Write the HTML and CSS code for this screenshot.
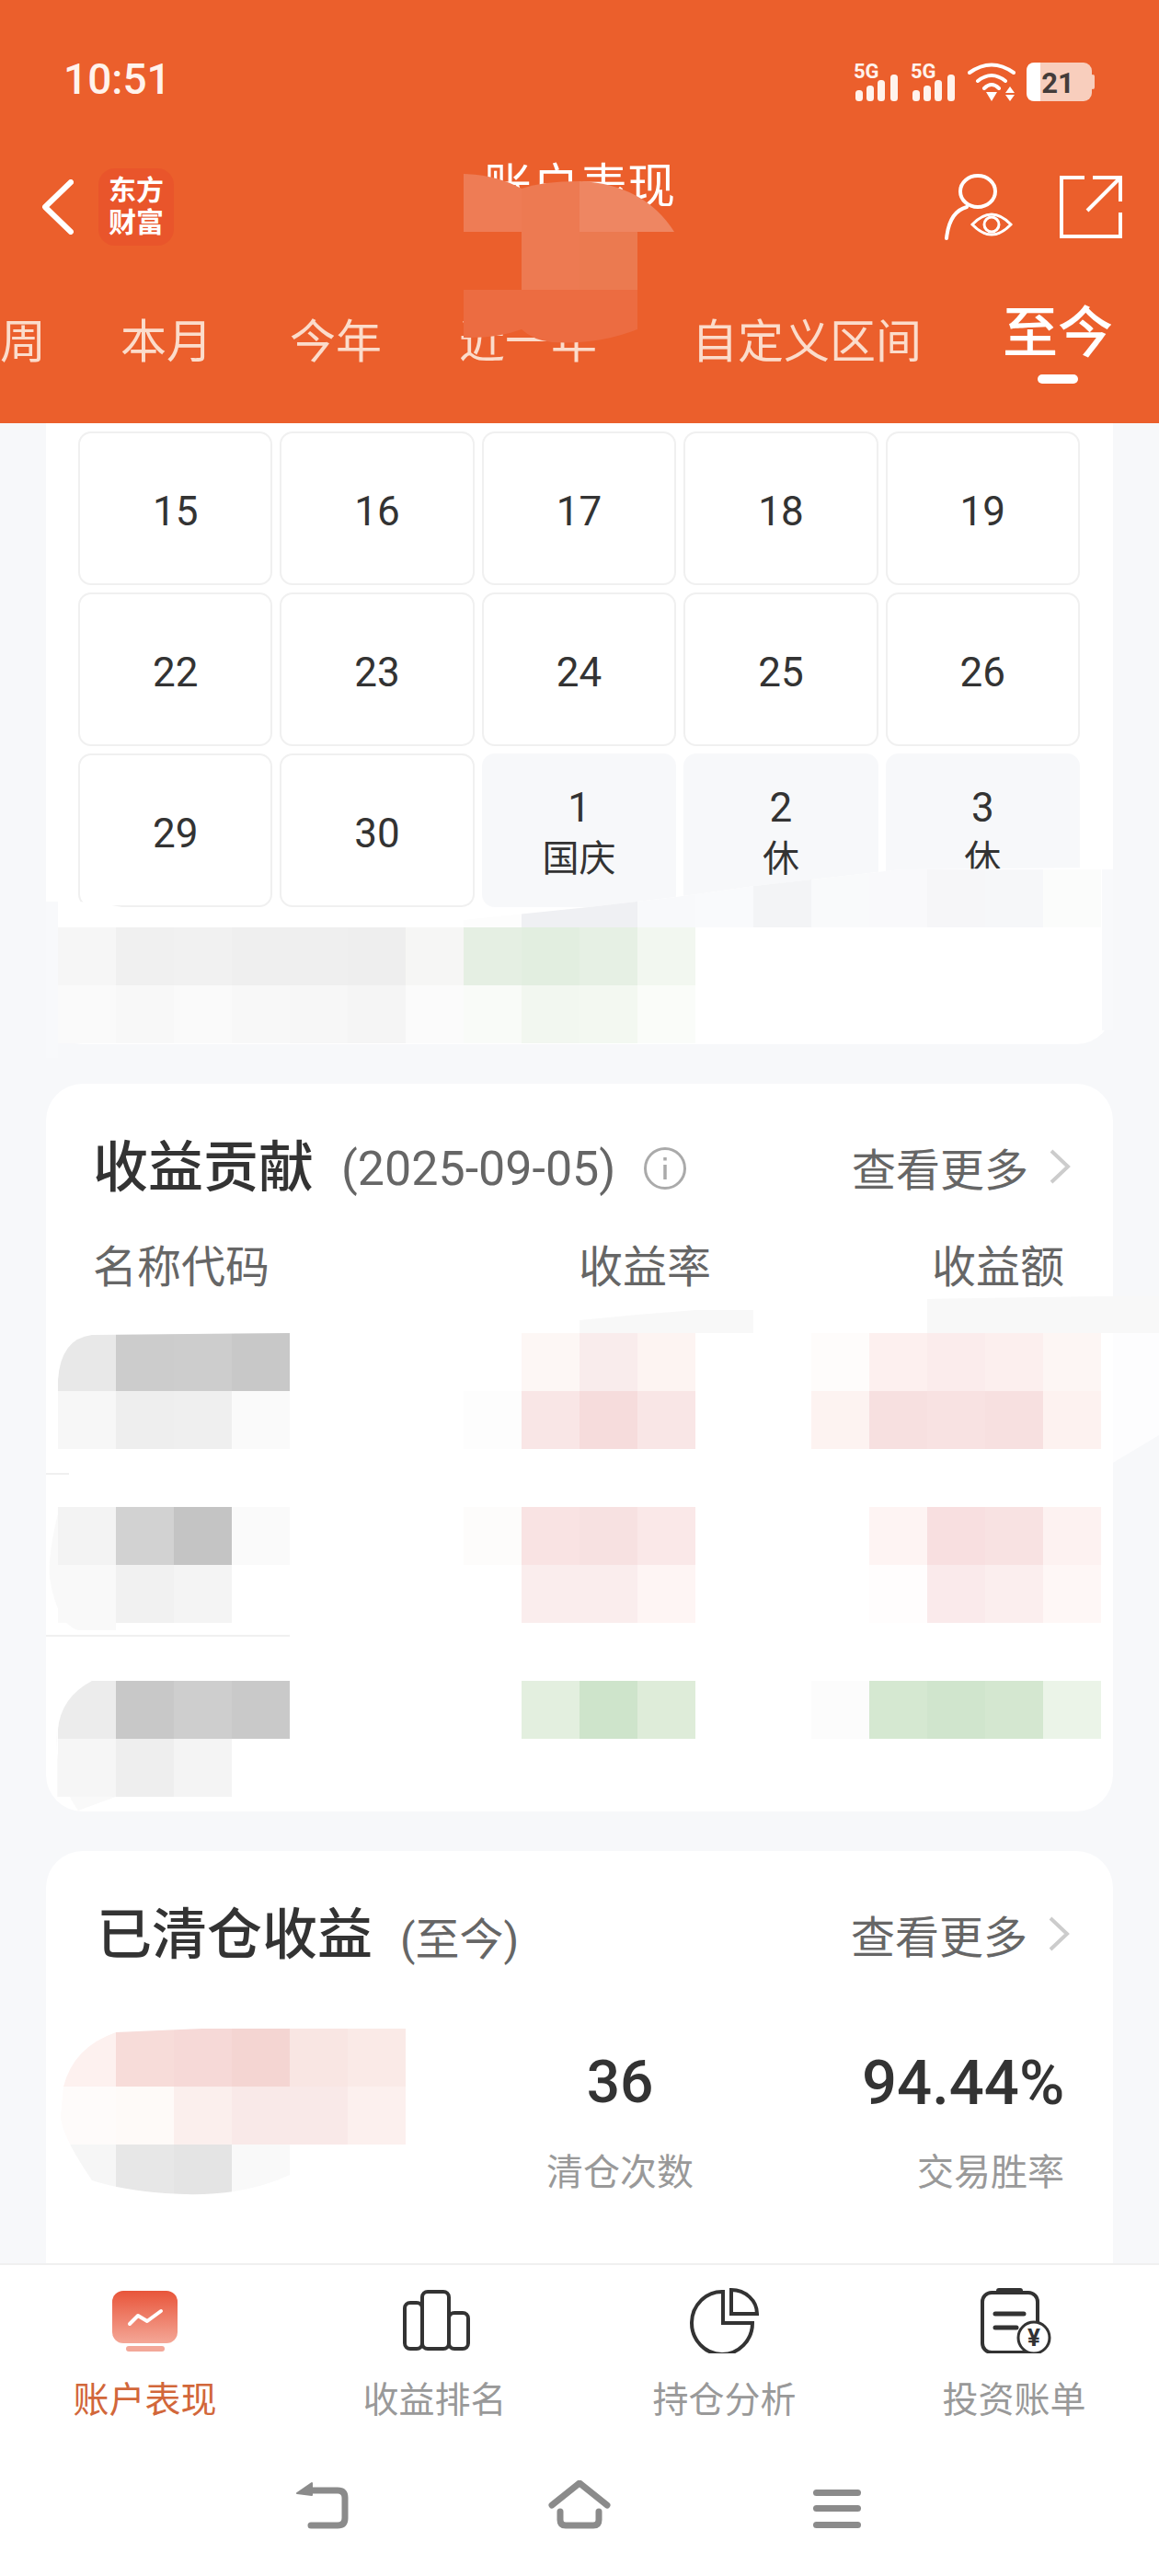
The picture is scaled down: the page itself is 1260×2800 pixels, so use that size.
FILE: index.html
```html
<!DOCTYPE html>
<html lang="zh-CN">
  <head>
    <meta charset="UTF-8" />
    <meta name="viewport" content="width=device-width, initial-scale=1.0" />
    <title>账户表现</title>
    <link rel="stylesheet" href="styles.css">
  </head>
  <body>
    <div class="page">
      <header class="header">
        <div class="status-bar">
          <span class="status-bar__time">10:51</span>
          <div class="status-bar__icons">
            <svg class="icon-signal" viewBox="0 -6 50 48">
              <text x="0" y="17" class="icon-signal__label">5G</text>
              <rect x="2" y="30" width="8" height="12" rx="3.5"/><rect x="14" y="25" width="8" height="17" rx="3.5"/><rect x="26" y="19" width="8" height="23" rx="3.5"/><rect x="40" y="13" width="8" height="29" rx="3.5"/>
            </svg>
            <svg class="icon-signal" viewBox="0 -6 50 48">
              <text x="0" y="17" class="icon-signal__label">5G</text>
              <rect x="2" y="30" width="8" height="12" rx="3.5"/><rect x="14" y="25" width="8" height="17" rx="3.5"/><rect x="26" y="19" width="8" height="23" rx="3.5"/><rect x="40" y="13" width="8" height="29" rx="3.5"/>
            </svg>
            <svg class="icon-wifi" viewBox="0 0 52 42">
              <path d="M2 11 Q26 -6 50 11 M11 20 Q26 8 41 20 M18 28 Q26 20 34 28" fill="none" stroke="#fff" stroke-width="4" stroke-linecap="round"/>
              <path d="M20 32 H32 L26 42 Z M41 33 L46 26 L51 33 Z M41 35 H51 L46 42 Z" fill="#fff"/>
            </svg>
            <svg class="icon-battery" viewBox="0 0 74 42">
              <rect x="70" y="13" width="4" height="16" rx="2" fill="#f8cebd"/>
              <rect width="71" height="42" rx="9" fill="#f8cebd"/>
              <path d="M9 0 H15 V42 H9 Q0 42 0 33 V9 Q0 0 9 0 Z" fill="#fff"/>
              <text x="34" y="33" class="icon-battery__label" text-anchor="middle">21</text>
            </svg>
          </div>
        </div>

        <div class="nav-row">
          <div class="nav-row__left">
            <svg class="icon-back" viewBox="0 0 34 60">
              <path d="M31 3 L3 30 L31 57" fill="none" stroke="#fff" stroke-width="6" stroke-linecap="round" stroke-linejoin="round"/>
            </svg>
            <div class="brand">东方<br>财富</div>
          </div>
          <h1 class="nav-row__title">账户表现</h1>
          <div class="nav-row__right">
            <svg class="icon-viewer" viewBox="0 0 76 74" fill="none" stroke="#fff">
              <ellipse cx="38" cy="20" rx="19" ry="17" stroke-width="4"/>
              <path d="M26 37 Q7 42 4 71" stroke-width="4" stroke-linecap="round"/>
              <path d="M32 56 Q53 34 74 56 Q53 78 32 56 Z" stroke-width="3"/>
              <circle cx="53" cy="56" r="8" stroke-width="3"/>
            </svg>
            <svg class="icon-share" viewBox="0 0 68 68" fill="none" stroke="#fff" stroke-width="4">
              <path d="M27 2 H2 V66 H66 V40"/>
              <path d="M30 38 L66 2 M36 2 H66 V28"/>
            </svg>
          </div>
        </div>

        <nav class="tabs">
          <a class="tabs__item">周</a>
          <a class="tabs__item">本月</a>
          <a class="tabs__item">今年</a>
          <a class="tabs__item">近一年</a>
          <a class="tabs__item tabs__item--wide">自定义区间</a>
          <a class="tabs__item tabs__item--active">至今</a>
        </nav>
      </header>

      <main class="content">
        <section class="card card--calendar">
          <div class="calendar">
            <div class="calendar__cell">15</div>
            <div class="calendar__cell">16</div>
            <div class="calendar__cell">17</div>
            <div class="calendar__cell">18</div>
            <div class="calendar__cell">19</div>
            <div class="calendar__cell">22</div>
            <div class="calendar__cell">23</div>
            <div class="calendar__cell">24</div>
            <div class="calendar__cell">25</div>
            <div class="calendar__cell">26</div>
            <div class="calendar__cell">29</div>
            <div class="calendar__cell">30</div>
            <div class="calendar__cell calendar__cell--off">1<small>国庆</small></div>
            <div class="calendar__cell calendar__cell--off">2<small>休</small></div>
            <div class="calendar__cell calendar__cell--off">3<small>休</small></div>
          </div>
        </section>

        <section class="card card--contrib">
          <div class="card__head">
            <h2 class="card__title">收益贡献</h2>
            <span class="card__date">(2025-09-05)</span>
            <svg class="icon-info" viewBox="0 0 48 48" fill="none" stroke="#aaa">
              <circle cx="24" cy="24" r="21.5" stroke-width="3"/>
              <path d="M24 20 V36" stroke-width="3.5"/>
              <path d="M24 12 V15.5" stroke-width="3.5"/>
            </svg>
            <a class="card__more">查看更多<svg class="icon-more" viewBox="0 0 24 38"><path d="M3 2 L21 19 L3 36" fill="none" stroke="#ccc" stroke-width="4"/></svg></a>
          </div>
          <div class="contrib-head">
            <span class="contrib-head__name">名称代码</span>
            <span class="contrib-head__rate">收益率</span>
            <span class="contrib-head__amount">收益额</span>
          </div>
          <div class="contrib-row"></div>
          <div class="contrib-row"></div>
        </section>

        <section class="card card--closed">
          <div class="card__head">
            <h2 class="card__title">已清仓收益</h2>
            <span class="card__date card__date--tight">(至今)</span>
            <a class="card__more">查看更多<svg class="icon-more" viewBox="0 0 24 38"><path d="M3 2 L21 19 L3 36" fill="none" stroke="#ccc" stroke-width="4"/></svg></a>
          </div>
          <div class="stats">
            <div class="stats__item stats__item--count">
              <div class="stats__value">36</div>
              <div class="stats__label">清仓次数</div>
            </div>
            <div class="stats__item stats__item--rate">
              <div class="stats__value">94.44%</div>
              <div class="stats__label">交易胜率</div>
            </div>
          </div>
        </section>
      </main>

      <footer class="footer">
        <div class="tabbar">
          <a class="tabbar__item tabbar__item--active">
            <svg class="tabbar__icon" viewBox="0 0 80 72">
              <defs>
                <linearGradient id="active-tab" x1="0" y1="0" x2="0" y2="1">
                  <stop offset="0" stop-color="#e8553a"/>
                  <stop offset="1" stop-color="#f4a797"/>
                </linearGradient>
              </defs>
              <rect x="4" y="4" width="71" height="57" rx="12" fill="url(#active-tab)"/>
              <rect x="19" y="64" width="42" height="6" rx="3" fill="#f3a899"/>
              <path d="M23 40 L32 31 L42 37 L57 26" fill="none" stroke="#fff" stroke-width="4" stroke-linecap="round" stroke-linejoin="round"/>
            </svg>
            <span>账户表现</span>
          </a>
          <a class="tabbar__item">
            <svg class="tabbar__icon" viewBox="0 0 80 72" fill="none" stroke="#333" stroke-width="4">
              <rect x="7" y="17" width="19" height="50" rx="6"/>
              <rect x="26" y="5" width="29" height="62" rx="6"/>
              <rect x="55" y="28" width="21" height="39" rx="6"/>
            </svg>
            <span>收益排名</span>
          </a>
          <a class="tabbar__item">
            <svg class="tabbar__icon" viewBox="0 0 80 72" fill="none" stroke="#333" stroke-width="4">
              <path d="M38 5 A33 34 0 1 0 70 39 H38 Z"/>
              <path d="M47 3 V29 H75 A28 26 0 0 0 47 3 Z"/>
            </svg>
            <span>持仓分析</span>
          </a>
          <a class="tabbar__item">
            <svg class="tabbar__icon" viewBox="0 0 80 72">
              <rect x="5" y="6" width="60" height="65" rx="10" fill="none" stroke="#333" stroke-width="4"/>
              <rect x="20" y="1" width="29" height="6" rx="3" fill="#333"/>
              <path d="M19 29 H50 M19 44 H42" stroke="#333" stroke-width="5" stroke-linecap="round"/>
              <circle cx="61" cy="55" r="17" fill="#fff" stroke="#333" stroke-width="3"/>
              <text x="61" y="64" class="tabbar__yen" text-anchor="middle">¥</text>
            </svg>
            <span>投资账单</span>
          </a>
        </div>
        <div class="system-nav">
          <svg class="system-nav__icon" viewBox="0 0 70 56">
            <path d="M20 11 H52 Q60 11 60 19 V41 Q60 49 52 49 H23" fill="none" stroke="#8b8b8b" stroke-width="7" stroke-linecap="round"/>
            <path d="M8 14 L24 3 V16 Z" fill="#8b8b8b" stroke="#8b8b8b" stroke-width="2" stroke-linejoin="round"/>
          </svg>
          <svg class="system-nav__icon" viewBox="0 0 70 56" fill="none" stroke="#8b8b8b" stroke-width="7" stroke-linecap="round">
            <path d="M5 27 L35 3 L65 27"/>
            <path d="M14 34 V43 Q14 49 20 49 H50 Q56 49 56 43 V34"/>
          </svg>
          <svg class="system-nav__icon" viewBox="0 0 70 56" fill="#8b8b8b">
            <rect x="9" y="10" width="52" height="7" rx="3.5"/>
            <rect x="9" y="27" width="52" height="7" rx="3.5"/>
            <rect x="9" y="45" width="52" height="7" rx="3.5"/>
          </svg>
        </div>
      </footer>

      <!-- privacy mosaic painted over the screenshot, blocks sit on a 63px grid -->
      <svg class="mosaic" viewBox="0 0 1260 2800">
        <defs>
          <clipPath id="cal-top"><path d="M504 1000 L640 986 L735 975 L820 963 L980 945 L1198 943 V1008 H504 Z"/></clipPath>
          <clipPath id="row1-left"><path d="M63 1575 V1500 Q66 1455 100 1451 L315 1449 V1575 Z"/></clipPath>
          <clipPath id="row3-left"><path d="M63 1953 V1880 Q66 1845 100 1827 L315 1827 V1953 Z"/></clipPath>
          <clipPath id="closed-left"><path d="M69 2268 Q80 2225 126 2209 L220 2205 H441 V2331 H315 V2364 Q260 2390 180 2384 Q130 2380 100 2370 Q66 2320 66 2300 Z"/></clipPath>
        </defs>

        <!-- header -->
        <path d="M504 189 Q540 190 567 205 V252 H504 Z" fill="#ee7c55"/>
        <path d="M567 205 Q590 197 630 197 V315 H567 Z" fill="#ed7a52"/>
        <path d="M630 197 V252 H733 Q700 200 630 197 Z" fill="#ee8662"/>
        <rect class="free" x="630" y="252" width="63" height="63" fill="#eb7a50"/>
        <path d="M504 315 H693 V358 Q650 375 600 372 Q580 370 567 358 Q540 368 504 367 Z" fill="#ec6c41"/>

        <!-- calendar card -->
        <rect class="free" x="50" y="980" width="13" height="170" fill="#f8f9fb"/>
        <rect class="free" x="1198" y="945" width="12" height="175" fill="#f8f9fb"/>
        <path d="M63 982 Q80 978 110 982 L190 996 L504 1000 L640 986 L735 975 L820 963 L980 945 L1198 943 V1010 H63 Z" fill="#fff"/>
        <g clip-path="url(#cal-top)">
          <rect x="504" y="945" fill="#fdfdfd"/><rect x="567" y="945" fill="#eff0f3"/><rect x="630" y="945" fill="#eff0f3"/><rect x="693" y="945" fill="#f8f9fb"/><rect x="756" y="945" fill="#f9fafc"/><rect x="819" y="945" fill="#f3f4f6"/><rect x="882" y="945" fill="#f9fafb"/><rect x="945" y="945" fill="#f9f9fb"/><rect x="1008" y="945" fill="#f6f6f8"/><rect x="1071" y="945" fill="#f6f7f9"/><rect x="1134" y="945" fill="#fbfcfb"/>
        </g>
        <rect x="63" y="1008" fill="#f6f6f6"/><rect x="126" y="1008" fill="#f0f0f0"/><rect x="189" y="1008" fill="#f1f1f1"/><rect x="252" y="1008" fill="#efefef"/><rect x="315" y="1008" fill="#efefef"/><rect x="378" y="1008" fill="#eeeeee"/><rect x="441" y="1008" fill="#f6f6f5"/><rect x="504" y="1008" fill="#e5efe3"/><rect x="567" y="1008" fill="#e2eee0"/><rect x="630" y="1008" fill="#e6f0e4"/><rect x="693" y="1008" fill="#f2f7f0"/>
        <rect x="63" y="1071" fill="#fafafa"/><rect x="126" y="1071" fill="#f8f8f8"/><rect x="189" y="1071" fill="#fafafa"/><rect x="252" y="1071" fill="#f8f8f8"/><rect x="315" y="1071" fill="#f7f7f7"/><rect x="378" y="1071" fill="#f5f5f5"/><rect x="441" y="1071" fill="#fbfbfb"/><rect x="504" y="1071" fill="#f9fbf8"/><rect x="567" y="1071" fill="#f2f7f0"/><rect x="630" y="1071" fill="#f3f8f1"/><rect x="693" y="1071" fill="#fafcf9"/>

        <!-- contribution rows -->
        <path d="M1210 1409 H1260 V1560 L1210 1590 Z" fill="#fdfdfe"/>
        <path d="M630 1435 L693 1429 L756 1424 H819 V1449 H630 Z" fill="#f8f8f8"/>
        <path d="M1008 1412 L1197 1409 H1260 V1449 H1008 Z" fill="#f8f8f8"/>
        <rect class="free" x="75" y="1590" width="1135" height="20" fill="#fff"/>
        <rect class="free" x="315" y="1770" width="895" height="20" fill="#fff"/>
        <g clip-path="url(#row1-left)">
          <rect x="63" y="1449" fill="#e8e8e8"/><rect x="126" y="1449" fill="#cccccc"/><rect x="189" y="1449" fill="#cdcdcd"/><rect x="252" y="1449" fill="#c8c8c8"/>
          <rect x="63" y="1512" fill="#f7f7f7"/><rect x="126" y="1512" fill="#eeeeee"/><rect x="189" y="1512" fill="#efefef"/><rect x="252" y="1512" fill="#fafafa"/>
        </g>
        <rect x="567" y="1449" fill="#fdf7f5"/><rect x="630" y="1449" fill="#f9ecec"/><rect x="693" y="1449" fill="#fdf4f2"/><rect x="882" y="1449" fill="#fefcfb"/><rect x="945" y="1449" fill="#fdf0ef"/><rect x="1008" y="1449" fill="#fbecec"/><rect x="1071" y="1449" fill="#fcefee"/><rect x="1134" y="1449" fill="#fdf6f4"/>
        <rect x="504" y="1512" fill="#fdfdfd"/><rect x="567" y="1512" fill="#f9e6e6"/><rect x="630" y="1512" fill="#f6dcdc"/><rect x="693" y="1512" fill="#f9e6e6"/><rect x="882" y="1512" fill="#fdf3f1"/><rect x="945" y="1512" fill="#f7e0e0"/><rect x="1008" y="1512" fill="#f8e2e2"/><rect x="1071" y="1512" fill="#f7e0e0"/><rect x="1134" y="1512" fill="#fdf2f0"/>

        <path d="M63 1645 Q52 1690 54 1715 Q62 1765 85 1772 L126 1772 V1764 H63 Z" fill="#f9f9f9"/>
        <rect x="63" y="1638" fill="#f3f3f3"/><rect x="126" y="1638" fill="#d2d2d2"/><rect x="189" y="1638" fill="#c4c4c4"/><rect x="252" y="1638" fill="#fafafa"/><rect x="504" y="1638" fill="#fdfcfb"/><rect x="567" y="1638" fill="#f9e3e3"/><rect x="630" y="1638" fill="#f7e1e1"/><rect x="693" y="1638" fill="#fae8e8"/><rect x="945" y="1638" fill="#fef4f3"/><rect x="1008" y="1638" fill="#f8dfe0"/><rect x="1071" y="1638" fill="#f8e2e2"/><rect x="1134" y="1638" fill="#fdf2f1"/>
        <rect x="63" y="1701" fill="#f9f9f9"/><rect x="126" y="1701" fill="#f1f1f1"/><rect x="189" y="1701" fill="#f4f4f4"/><rect x="567" y="1701" fill="#faeded"/><rect x="630" y="1701" fill="#faeded"/><rect x="693" y="1701" fill="#fef5f4"/><rect x="945" y="1701" fill="#fffdfd"/><rect x="1008" y="1701" fill="#faeaeb"/><rect x="1071" y="1701" fill="#fbeeee"/><rect x="1134" y="1701" fill="#fef7f6"/>

        <path d="M62 1880 Q58 1930 85 1968 L126 1953 H62 Z" fill="#f9f9f9"/>
        <g clip-path="url(#row3-left)">
          <rect x="63" y="1827" fill="#ececec"/><rect x="126" y="1827" fill="#c8c8c8"/><rect x="189" y="1827" fill="#cecece"/><rect x="252" y="1827" fill="#c9c9c9"/>
          <rect x="63" y="1890" fill="#f6f6f6"/><rect x="126" y="1890" fill="#eeeeee"/><rect x="189" y="1890" fill="#f4f4f4"/>
        </g>
        <rect x="567" y="1827" fill="#e3efdf"/><rect x="630" y="1827" fill="#cee4cb"/><rect x="693" y="1827" fill="#deecd9"/><rect x="882" y="1827" fill="#fcfcfc"/><rect x="945" y="1827" fill="#d5e8d1"/><rect x="1008" y="1827" fill="#d0e5cd"/><rect x="1071" y="1827" fill="#d4e7d0"/><rect x="1134" y="1827" fill="#ebf4e8"/>

        <!-- closed positions -->
        <g clip-path="url(#closed-left)">
          <rect x="63" y="2205" fill="#fdf1ef"/><rect x="126" y="2205" fill="#f7dcd9"/><rect x="189" y="2205" fill="#f6d9d7"/><rect x="252" y="2205" fill="#f4d5d2"/><rect x="315" y="2205" fill="#f9e6e3"/><rect x="378" y="2205" fill="#faeae7"/>
          <rect x="63" y="2268" fill="#fefbfa"/><rect x="126" y="2268" fill="#fefaf8"/><rect x="189" y="2268" fill="#fbefed"/><rect x="252" y="2268" fill="#f9e9e8"/><rect x="315" y="2268" fill="#f9e9e8"/><rect x="378" y="2268" fill="#fcf0ee"/>
          <rect x="63" y="2331" fill="#f6f6f6"/><rect x="126" y="2331" fill="#e7e7e7"/><rect x="189" y="2331" fill="#e4e4e4"/><rect x="252" y="2331" fill="#f9f9f9"/>
        </g>
      </svg>
    </div>
  </body>
</html>
```

FILE: styles.css
```css
:root {
  --color-brand: #eb5f2c;
  --color-bg: #f7f8fa;
  --color-text: #333;
  --color-text-2: #666;
  --color-text-3: #999;
  --color-line: #f0f0f0;
  --font-main: Roboto, "Noto Sans CJK SC", sans-serif;
}
* {
  box-sizing: border-box;
}
body {
  margin: 0;
  font-family: var(--font-main);
  color: var(--color-text);
}
.page {
  position: relative;
  display: flex;
  flex-direction: column;
  width: 1260px;
  height: 2800px;
  overflow: hidden;
  background: var(--color-bg);
}

.header {
  flex: none;
  height: 460px;
  background: var(--color-brand);
  color: #fff;
}
.status-bar {
  display: flex;
  justify-content: space-between;
  align-items: center;
  height: 170px;
  padding: 2px 70px 0 69px;
}
.status-bar__time {
  font-size: 46px;
  font-weight: 500;
  color: #fff3ec;
}
.status-bar__icons {
  display: flex;
  align-items: flex-end;
  gap: 12px;
}
.icon-signal {
  width: 50px;
  height: 48px;
  fill: #fff3ec;
}
.icon-signal__label {
  font-size: 22px;
  font-weight: 700;
}
.icon-wifi {
  width: 52px;
  height: 42px;
}
.icon-battery {
  width: 74px;
  height: 42px;
}
.icon-battery__label {
  font-size: 31px;
  font-weight: 700;
  fill: #443c3a;
}

.nav-row {
  display: flex;
  justify-content: space-between;
  align-items: center;
  position: relative;
  height: 110px;
  padding: 0 40px 0 46px;
}
.nav-row__left,
.nav-row__right {
  display: flex;
  align-items: center;
}
.nav-row__title {
  position: absolute;
  left: 0;
  right: 0;
  top: 3px;
  margin: 0;
  font-size: 52px;
  line-height: 62px;
  font-weight: 400;
  text-align: center;
}
.icon-back {
  width: 34px;
  height: 60px;
}
.brand {
  width: 82px;
  height: 84px;
  margin-left: 27px;
  border-radius: 18px;
  background: #e9552b;
  font-size: 30px;
  font-weight: 700;
  line-height: 35px;
  padding-top: 6px;
  text-align: center;
}
.icon-viewer {
  width: 76px;
  height: 74px;
}
.icon-share {
  width: 68px;
  height: 68px;
  margin-left: 51px;
}

.tabs {
  display: flex;
  gap: 84px;
  height: 180px;
  padding-top: 62px;
  white-space: nowrap;
}
.tabs__item {
  font-size: 50px;
  line-height: 60px;
  color: #fbdccb;
}
.tabs__item:first-child {
  margin-right: -3px;
}
.tabs__item--wide {
  margin-left: 19px;
}
.tabs__item--active {
  position: relative;
  margin-top: -9px;
  margin-left: 4px;
  font-size: 60px;
  font-weight: 500;
  color: #fff;
}
.tabs__item--active::after {
  content: "";
  position: absolute;
  left: 38px;
  top: 74px;
  width: 44px;
  height: 10px;
  border-radius: 5px;
  background: #fff;
}

.content {
  flex: 1;
  overflow: hidden;
}
.card {
  margin: 43px 50px 0;
  background: #fff;
  border-radius: 40px;
}
.card--calendar {
  height: 675px;
  margin-top: 0;
  padding: 9px 36px 0 35px;
  border-radius: 0 0 40px 40px;
}
.calendar {
  display: grid;
  grid-template-columns: repeat(5, 1fr);
  grid-auto-rows: 167px;
  gap: 8px;
}
.calendar__cell {
  display: flex;
  flex-direction: column;
  justify-content: center;
  align-items: center;
  padding-top: 6px;
  border: 2px solid var(--color-line);
  border-radius: 14px;
  font-size: 44px;
  line-height: 56px;
}
.calendar__cell small {
  font-size: 40px;
}
.calendar__cell--off {
  border-color: var(--color-bg);
  background: var(--color-bg);
}

.card--contrib {
  height: 791px;
  padding: 62px 53px 0 51px;
}
.card--closed {
  height: 600px;
  padding: 62px 47px 0 55px;
}
.card__head {
  display: flex;
  align-items: center;
  height: 60px;
}
.card__title {
  margin: 0;
  font-size: 60px;
  line-height: 60px;
  font-weight: 500;
}
.card__date {
  margin-left: 30px;
  font-size: 52px;
  color: var(--color-text-2);
}
.card__date--tight {
  font-size: 48px;
}
.icon-info {
  width: 48px;
  height: 48px;
  margin-left: 30px;
}
.card__more {
  display: flex;
  align-items: center;
  margin-top: -4px;
  margin-left: auto;
  margin-right: -7px;
  font-size: 48px;
  color: var(--color-text-2);
}
.icon-more {
  width: 24px;
  height: 38px;
  margin-left: 22px;
}
.card--closed .card__more {
  margin-right: 0;
}

.contrib-head {
  display: flex;
  margin-top: 48px;
  font-size: 48px;
  line-height: 60px;
  color: var(--color-text-2);
}
.contrib-head__name {
  flex: 1;
}
.contrib-head__rate {
  width: 145px;
  text-align: right;
}
.contrib-head__amount {
  width: 384px;
  text-align: right;
}
.contrib-row {
  height: 176px;
  margin: 0 -53px 0 -51px;
  border-bottom: 2px solid var(--color-line);
}
.contrib-head + .contrib-row {
  margin-top: 19px;
}

.stats {
  display: flex;
  justify-content: flex-end;
  gap: 183px;
  margin: 90px 6px 0 0;
}
.stats__item--count {
  width: 160px;
  text-align: center;
}
.stats__item--rate {
  width: 220px;
  text-align: right;
}
.stats__value {
  font-size: 64px;
  line-height: 80px;
  font-weight: 500;
  white-space: nowrap;
}
.stats__item--rate .stats__value {
  font-size: 67px;
}
.stats__label {
  margin-top: 28px;
  font-size: 40px;
  line-height: 60px;
  color: var(--color-text-3);
}

.footer {
  flex: none;
  height: 340px;
  border-top: 2px solid var(--color-line);
  background: #fff;
}
.tabbar {
  display: flex;
  padding-top: 24px;
}
.tabbar__item {
  display: flex;
  flex-direction: column;
  align-items: center;
  flex: 1;
  font-size: 39px;
  line-height: 50px;
  color: var(--color-text-3);
}
.tabbar__item--active {
  color: #d2673a;
}
.tabbar__icon {
  width: 80px;
  height: 72px;
  margin-bottom: 26px;
}
.tabbar__yen {
  font-size: 26px;
  font-weight: 700;
  fill: #333;
}
.system-nav {
  display: flex;
  justify-content: center;
  gap: 210px;
  margin-top: 62px;
}
.system-nav__icon {
  width: 70px;
  height: 56px;
}

.mosaic {
  position: absolute;
  left: 0;
  top: 0;
  width: 1260px;
  height: 2800px;
  pointer-events: none;
}
.mosaic rect:not(.free) {
  width: 63px;
  height: 63px;
}
```
